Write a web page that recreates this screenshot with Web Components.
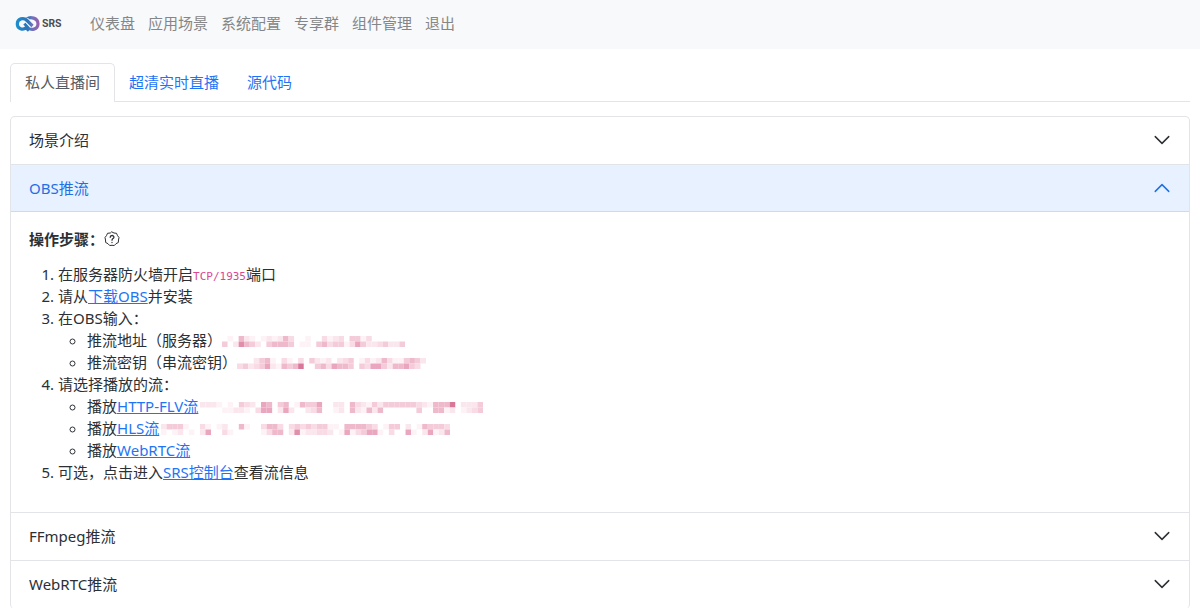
<!DOCTYPE html>
<html lang="zh-CN">
<head>
<meta charset="utf-8">
<meta name="viewport" content="width=device-width, initial-scale=1">
<title>SRS</title>
<style>
  body {
    margin: 0;
    background: #fff;
    color: #2c3034;
    font: 15px/22px "Noto Sans", "Noto Sans CJK SC", sans-serif;
    --link: #1f74f5;
    --line: #e2e4e7;
  }
</style>
</head>
<body>
<srs-app></srs-app>
<script>
const define = (name, html, setup) => {
  const template = document.createElement('template');
  template.innerHTML = html;
  customElements.define(name, class extends HTMLElement {
    connectedCallback() {
      if (this.shadowRoot) return;
      this.attachShadow({ mode: 'open' }).append(template.content.cloneNode(true));
      if (setup) setup(this, this.shadowRoot);
    }
  });
};

define('srs-logo', `
  <style>:host { display: block; } a { display: block; } svg { display: block; }</style>
  <a href="#" aria-label="SRS">
    <svg width="50" height="18" viewBox="0 0 50 18">
      <defs>
        <linearGradient id="g" gradientUnits="userSpaceOnUse" x1="1" y1="0" x2="25" y2="0">
          <stop offset="0" stop-color="#1c8fce"/><stop offset=".5" stop-color="#2c74b8"/>
          <stop offset=".65" stop-color="#6b74bd"/><stop offset="1" stop-color="#a05aa8"/>
        </linearGradient>
      </defs>
      <g fill="none" stroke-width="3.200">
        <path stroke="url(#g)" d="M12 4 C15 1.500 23 2.500 23 8.800 C23 15 15.500 15.500 13 12.500 L9.500 8.500"/>
        <path stroke="#f8f9fa" stroke-width="5" d="M11 4.500 L17 11"/>
        <path stroke="url(#g)" d="M14 15.500 L11 12.800 C8 15.500 2.300 14 2.300 9 C2.300 3.500 8.500 2 12 5.500 L17.500 11"/>
      </g>
      <text x="27" y="12" font-family="Inter, sans-serif" font-size="10" font-weight="700" fill="#4c4d50">SRS</text>
    </svg>
  </a>`);

define('srs-navbar', `
  <style>
    :host { display: block; background: #f8f9fa; }
    nav { display: flex; align-items: center; padding: 12px 15px 14px; line-height: 23px; }
    .menu { display: flex; gap: 13px; margin-left: 25px; }
    a { color: #858687; text-decoration: none; }
  </style>
  <nav>
    <srs-logo></srs-logo>
    <div class="menu">
      <a href="#">仪表盘</a><a href="#">应用场景</a><a href="#">系统配置</a>
      <a href="#">专享群</a><a href="#">组件管理</a><a href="#">退出</a>
    </div>
  </nav>`);

define('srs-tabs', `
  <style>
    :host { display: flex; align-items: flex-end; border-bottom: 1px solid var(--line); }
    button {
      font: inherit; color: var(--link); background: none; border: 0;
      padding: 7px 14px 8px; margin: 0; cursor: pointer;
    }
    button[aria-selected=true] {
      color: #565c62; background: #fff; border: 1px solid var(--line);
      border-bottom: 0; border-radius: 5px 5px 0 0; margin-bottom: -1px; padding-bottom: 9px;
    }
  </style>
  <button role="tab" aria-selected="true">私人直播间</button>
  <button role="tab" aria-selected="false">超清实时直播</button>
  <button role="tab" aria-selected="false">源代码</button>`,
  (host) => host.setAttribute('role', 'tablist'));

define('srs-panel', `
  <style>
    :host { display: block; border-bottom: 1px solid var(--line); }
    h2 { margin: 0; font: inherit; }
    button {
      display: flex; align-items: center; justify-content: space-between;
      width: 100%; padding: 12px 18px 13px; border: 0; margin: 0;
      background: none; font: inherit; color: inherit; text-align: left; cursor: pointer;
    }
    svg { display: block; }
    .body { display: none; padding: 16px 18px 14px; }
    :host([open]) button { background: #e7f1ff; color: #1f6fe6; box-shadow: inset 0 -1px #cfdbea; }
    :host([open]) svg { transform: rotate(180deg); }
    :host([open]) .body { display: block; }
  </style>
  <h2><button type="button">
    <slot name="title"></slot>
    <svg width="18" height="18" viewBox="0 0 16 16" fill="none" stroke="currentColor" stroke-width="1.300" stroke-linecap="round" stroke-linejoin="round"><path d="M2 5l6 6 6-6"/></svg>
  </button></h2>
  <div class="body"><slot></slot></div>`,
  (host, root) => {
    const button = root.querySelector('button');
    button.setAttribute('aria-expanded', host.hasAttribute('open'));
    button.addEventListener('click', () => {
      button.setAttribute('aria-expanded', host.toggleAttribute('open'));
    });
  });

/* Pixelated strip: each digit of a row is the strength of one cell. */
define('masked-text', `
  <style>
    :host { display: inline-block; vertical-align: middle; height: 11px; }
    svg { display: block; }
  </style>
  <svg height="11" preserveAspectRatio="none" aria-hidden="true"></svg>`,
  (host, root) => {
    const colors = ['', '#fdf3f6', '#fae7ed', '#f8dbe5', '#f4cbd9', '#efb9cc', '#eaa6bf', '#e18eab', '#d8779a'];
    const rows = host.getAttribute('cells').split(' ');
    const svg = root.querySelector('svg');
    const columns = rows[0].length;
    svg.setAttribute('viewBox', `0 0 ${columns} 2`);
    svg.setAttribute('width', Math.round(columns * 50 / 9));
    svg.innerHTML = rows.map((row, y) => [...row].map((level, x) =>
      level === '0' ? '' : `<rect x="${x}" y="${y}" width="1" height="1" fill="${colors[level]}"/>`
    ).join('')).join('');
  });

define('obs-steps', `
  <style>
    :host { display: block; }
    p { display: flex; align-items: center; margin: 0 0 13px; font-weight: 700; }
    .help { display: block; padding: 0; border: 0; background: none; color: inherit; cursor: pointer; }
    svg { display: block; }
    ol, ul { margin: 0; padding-left: 29px; }
    ol { margin-bottom: 15px; }
    ul { list-style: circle; }
    a { color: var(--link); text-decoration: underline; }
    code { font: 11px/11px "DejaVu Sans Mono", monospace; color: #da4791; }
    a + masked-text { margin-left: 2px; }
  </style>
  <p>操作步骤：
    <button class="help" type="button" aria-label="帮助">
      <svg width="16" height="16" viewBox="0 0 16 16" fill="none" stroke="currentColor" stroke-linecap="round" stroke-linejoin="round">
        <path d="M8 1 L10 2 L12.500 2.300 L13.500 4.600 L15 6.500 L14.500 9 L14.300 11.500 L12 12.700 L10.300 14.500 L8 14.300 L5.700 14.500 L4 12.700 L1.700 11.500 L1.500 9 L1 6.500 L2.500 4.600 L3.500 2.300 L6 2 Z"/>
        <path stroke-width="1.300" d="M6.200 6.300 C6.200 3.900 9.900 3.900 9.900 6.200 C9.900 7.600 8 7.600 8 9.200 M8 11.400v.1"/>
      </svg>
    </button>
  </p>
  <ol>
    <li>在服务器防火墙开启<code>TCP/1935</code>端口</li>
    <li>请从<a href="#">下载OBS</a>并安装</li>
    <li>在OBS输入：
      <ul>
        <li>推流地址（服务器）<masked-text cells="010521012125300100312304413000000 402754204555401104534413642234224"></masked-text></li>
        <li>推流密钥（串流密钥）<masked-text cells="0002451031030421202340131253114542 3423462154580045365540436642556430"></masked-text></li>
      </ul>
    </li>
    <li>请选择播放的流：
      <ul>
        <li>播放<a href="#">HTTP-FLV流</a><masked-text cells="222101043206504501544600220532142444444321555802224 000011221036602620023500120521525000000400551201234"></masked-text></li>
        <li>播放<a href="#">HLS流</a><masked-text cells="2444100310120051003553034343441105555430144020154443 1012010260031000001355027122332016134661030061026125"></masked-text></li>
        <li>播放<a href="#">WebRTC流</a></li>
      </ul>
    </li>
    <li>可选，点击进入<a href="#">SRS控制台</a>查看流信息</li>
  </ol>`);

define('srs-app', `
  <style>
    :host { display: block; }
    main { padding: 14px 10px; }
    .accordion { margin-top: 14px; border: 1px solid var(--line); border-bottom: 0; border-radius: 5px; }
  </style>
  <srs-navbar></srs-navbar>
  <main>
    <srs-tabs></srs-tabs>
    <div class="accordion">
      <srs-panel><span slot="title">场景介绍</span></srs-panel>
      <srs-panel open><span slot="title">OBS推流</span><obs-steps></obs-steps></srs-panel>
      <srs-panel><span slot="title">FFmpeg推流</span></srs-panel>
      <srs-panel><span slot="title">WebRTC推流</span></srs-panel>
    </div>
  </main>`);
</script>
</body>
</html>
